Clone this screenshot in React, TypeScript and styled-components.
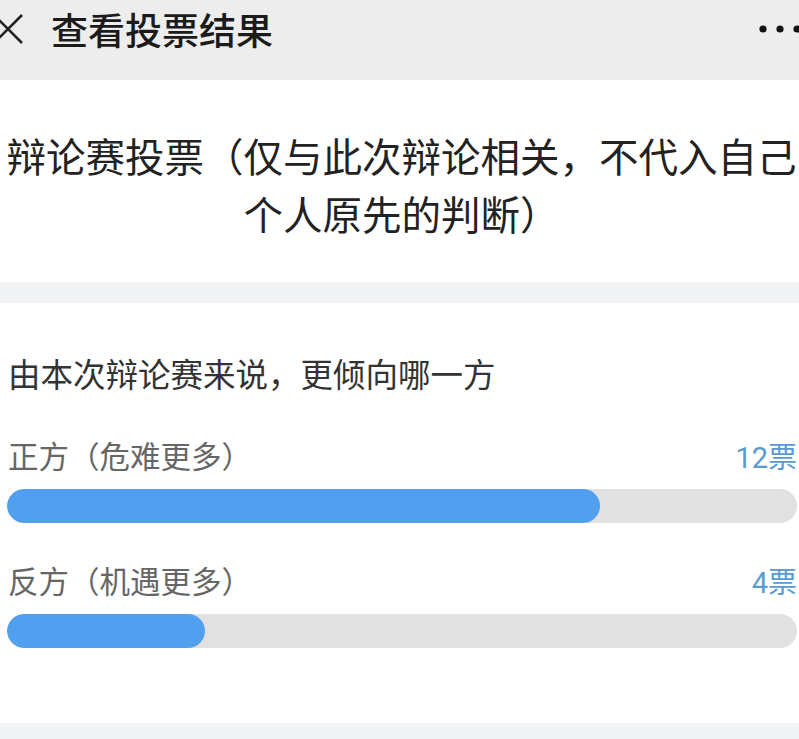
import React from 'react';
import styled, { createGlobalStyle } from 'styled-components';

const GlobalStyle = createGlobalStyle`
  html, body {
    margin: 0;
    padding: 0;
    background: #f2f3f5;
  }
  body {
    font-family: "Noto Sans CJK SC", "Noto Sans", sans-serif;
  }
`;

const Page = styled.div`
  min-height: 739px;
  background: #f2f3f5;
`;

const Header = styled.header`
  height: 80px;
  box-sizing: border-box;
  padding-bottom: 22px;
  background: #ededed;
  display: flex;
  align-items: center;
  overflow: hidden;
`;

const CloseIcon = styled.svg`
  width: 30px;
  height: 30px;
  margin-left: -7px;
  flex-shrink: 0;
`;

const HeaderTitle = styled.h1`
  margin: 0 0 0 28px;
  font-size: 37px;
  line-height: 44px;
  font-weight: 500;
  color: #1b1b1b;
`;

const MoreIcon = styled.svg`
  width: 40px;
  height: 10px;
  margin-left: auto;
  flex-shrink: 0;
`;

const TitleCard = styled.section`
  background: #fff;
  padding: 46px 2px 40px 6px;
`;

const VoteTitle = styled.h2`
  margin: 0;
  font-size: 39.5px;
  line-height: 58px;
  font-weight: 400;
  color: #222;
  text-align: center;
`;

const QuestionCard = styled.section`
  background: #fff;
  margin-top: 21px;
  padding: 50px 2px 75px 7px;
`;

const Question = styled.div`
  font-size: 32.5px;
  line-height: 40px;
  color: #333;
  margin-bottom: 44px;
  padding-left: 1px;
`;

const Option = styled.div`
  & + & {
    margin-top: 39px;
  }
`;

const OptionRow = styled.div`
  display: flex;
  justify-content: space-between;
  align-items: center;
  height: 36px;
`;

const OptionLabel = styled.span`
  font-size: 30.5px;
  color: #666;
  padding-left: 1px;
`;

const Count = styled.span`
  font-family: Roboto, "Noto Sans CJK SC", sans-serif;
  font-size: 29px;
  color: #5a9bd3;
`;

const Track = styled.div`
  margin-top: 16px;
  height: 34px;
  border-radius: 17px;
  background: #e1e1e1;
  overflow: hidden;
`;

const Fill = styled.div`
  height: 100%;
  border-radius: 17px;
  background: #51a0f0;
`;

const options = [
  { label: '正方（危难更多）', votes: 12 },
  { label: '反方（机遇更多）', votes: 4 },
];

const total = options.reduce((s, o) => s + o.votes, 0);

const App: React.FC = () => {
  return (
    <Page>
      <GlobalStyle />
      <Header>
        <CloseIcon viewBox="0 0 30 30">
          <path d="M1 1 L29 29 M29 1 L1 29" stroke="#222" strokeWidth="2.6" fill="none" />
        </CloseIcon>
        <HeaderTitle>查看投票结果</HeaderTitle>
        <MoreIcon viewBox="0 0 40 10">
          <circle cx="4" cy="5" r="3.6" fill="#111" />
          <circle cx="21" cy="5" r="3.6" fill="#111" />
          <circle cx="38" cy="5" r="3.6" fill="#111" />
        </MoreIcon>
      </Header>

      <TitleCard>
        <VoteTitle>辩论赛投票（仅与此次辩论相关，不代入自己个人原先的判断）</VoteTitle>
      </TitleCard>

      <QuestionCard>
        <Question>由本次辩论赛来说，更倾向哪一方</Question>
        {options.map((o) => (
          <Option key={o.label}>
            <OptionRow>
              <OptionLabel>{o.label}</OptionLabel>
              <Count>{o.votes}票</Count>
            </OptionRow>
            <Track>
              <Fill style={{ width: `${(o.votes / total) * 100}%` }} />
            </Track>
          </Option>
        ))}
      </QuestionCard>
    </Page>
  );
};

export default App;
